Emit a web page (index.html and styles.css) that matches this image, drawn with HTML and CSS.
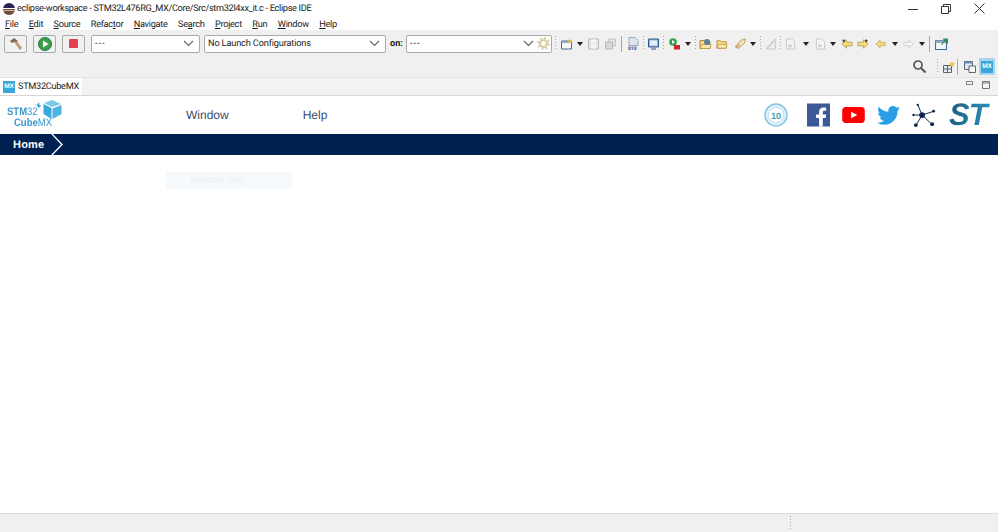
FILE: index.html
```html
<!DOCTYPE html>
<html lang="en">
<head>
  <meta charset="UTF-8" />
  <title>eclipse-workspace - Eclipse IDE</title>
  <link rel="stylesheet" href="styles.css">
</head>
<body>
  <svg class="defs" width="0" height="0">
    <symbol id="caret" viewBox="0 0 6 4"><path d="M0 0h6L3 4z" fill="#222"/></symbol>
    <symbol id="chev" viewBox="0 0 11 7"><path d="M1 1l4.500 4.500L10 1" fill="none" stroke="#666" stroke-width="1.200"/></symbol>
    <symbol id="arrow-left" viewBox="0 0 13 11"><path d="M6 1L1 5.500 6 10V7.500h6v-4H6z" fill="currentColor" stroke="#a8914a" stroke-width=".8"/><circle cx="3" cy="2" r="1.500" fill="#4a4a3a"/></symbol>
    <symbol id="arrow-right" viewBox="0 0 13 11"><path d="M7 1l5 4.500L7 10V7.500H1v-4h6z" fill="currentColor" stroke="#a8914a" stroke-width=".8"/><circle cx="10" cy="2" r="1.500" fill="#4a4a3a"/></symbol>
    <symbol id="arrow-plain-left" viewBox="0 0 13 11"><path d="M6 1L1 5.500 6 10V7.500h6v-4H6z" fill="currentColor" stroke="#b5a05a" stroke-width=".8"/></symbol>
    <symbol id="arrow-plain-right" viewBox="0 0 13 11"><path d="M7 1l5 4.500L7 10V7.500H1v-4h6z" fill="currentColor" stroke="#c4c4c4" stroke-width=".8"/></symbol>
    <symbol id="folder" viewBox="0 0 13 11"><path d="M1 2h4l1 1h5v7H1z" fill="#f7d98c" stroke="#b58b35"/><path d="M1 10l2-4h9l-1 4z" fill="#fbe7ac" stroke="#b58b35" stroke-width=".7"/></symbol>
    <symbol id="file-grey" viewBox="0 0 11 13"><path d="M1 1h6l3 3v8H1z" fill="#f4f4f4" stroke="#c4c4c4"/><path d="M3 7h4v3H3z" fill="#d2d2d2"/></symbol>
  </svg>

  <header class="titlebar">
    <svg class="eclipse-logo" width="12" height="12" viewBox="0 0 12 12">
      <circle cx="6" cy="6" r="6" fill="#2c2255"/>
      <path d="M0 5h12v1H0zM.3 7.200h11.400v.9H.3z" fill="#fff"/>
      <path d="M0 6a6 6 0 0 0 12 0z" fill="#f7941e" opacity=".35"/>
    </svg>
    <span class="window-title">eclipse-workspace - STM32L476RG_MX/Core/Src/stm32l4xx_it.c - Eclipse IDE</span>
    <div class="window-controls">
      <svg width="10" height="10" viewBox="0 0 10 10"><path d="M0 5.500h10" stroke="#333"/></svg>
      <svg width="10" height="10" viewBox="0 0 10 10"><path d="M.5 2.500h7v7h-7zM2.500 2.500v-2h7v7h-2" fill="none" stroke="#333"/></svg>
      <svg width="11" height="11" viewBox="0 0 11 11"><path d="M.5.500l10 10M10.500.500l-10 10" stroke="#333"/></svg>
    </div>
  </header>

  <nav class="menubar">
    <span><u>F</u>ile</span>
    <span><u>E</u>dit</span>
    <span><u>S</u>ource</span>
    <span>Refac<u>t</u>or</span>
    <span><u>N</u>avigate</span>
    <span>Se<u>a</u>rch</span>
    <span><u>P</u>roject</span>
    <span><u>R</u>un</span>
    <span><u>W</u>indow</span>
    <span><u>H</u>elp</span>
  </nav>

  <div class="toolbar">
    <button class="launch-btn">
      <svg width="14" height="14" viewBox="0 0 14 14"><path d="M1 4l4-3 4 3-2 2-2-1-2 1z" fill="#7d6a55"/><path d="M5.500 5.500l2-1.500 5.500 7-2 2z" fill="#b8966a"/></svg>
    </button>
    <button class="launch-btn">
      <svg width="14" height="14" viewBox="0 0 14 14"><circle cx="7" cy="7" r="6.500" fill="#3c9d4b" stroke="#1f7a35"/><path d="M5 3.500L10.500 7 5 10.500z" fill="#fff"/></svg>
    </button>
    <button class="launch-btn">
      <svg width="9" height="9" viewBox="0 0 10 10"><rect width="10" height="10" rx="1" fill="#e2404e"/></svg>
    </button>

    <div class="combo combo-mode"><span class="dashes">---</span><svg width="11" height="7"><use href="#chev"/></svg></div>
    <div class="combo combo-config"><span>No Launch Configurations</span><svg width="11" height="7"><use href="#chev"/></svg></div>
    <span class="on-label">on:</span>
    <div class="combo combo-target">
      <span class="dashes">---</span><svg width="11" height="7"><use href="#chev"/></svg>
      <svg class="gear" width="13" height="13" viewBox="0 0 13 13"><circle cx="6.500" cy="6.500" r="3.500" fill="none" stroke="#d8cfa4" stroke-width="2.200"/><circle cx="6.500" cy="6.500" r="5.500" fill="none" stroke="#d8cfa4" stroke-width="2" stroke-dasharray="2 2.300"/></svg>
    </div>

    <i class="grip ml3"></i>
    <svg class="tool w12 ml5" viewBox="0 0 12 11"><path d="M.5 2.500h10v8H.5z" fill="#f7f9fc" stroke="#456a94"/><path d="M.5 2.500h10v2H.5z" fill="#8aa6c6"/><path d="M9 0l.8 1.500 1.700.5-1.200 1.100.3 1.700L9 4l-1.600.8.300-1.700L6.500 2l1.700-.5z" fill="#e9c53c"/></svg>
    <svg class="caret ml4"><use href="#caret"/></svg>
    <svg class="tool w11 ml5" viewBox="0 0 11 11"><path d="M.5.500h10v10H.5z" fill="#e5e5e5" stroke="#bbb"/><path d="M3 1h5v3H3zM3 6h5v4H3z" fill="#f7f7f7"/></svg>
    <svg class="tool w11 ml6" viewBox="0 0 11 11"><path d="M3.500.500h7v7h-7z" fill="#e5e5e5" stroke="#c3c3c3"/><path d="M.5 3.500h7v7h-7z" fill="#d8d8d8" stroke="#b7b7b7"/></svg>
    <i class="sep ml5"></i>
    <svg class="tool h13 ml6" viewBox="0 0 11 13"><path d="M1 .500h6l3 3v5H1z" fill="#dfe6f0" stroke="#9aa9be"/><text x="0" y="12.500" class="tiny-label">010</text></svg>
    <i class="grip ml4"></i>
    <svg class="tool w11 ml4" viewBox="0 0 11 11"><path d="M.5.500h10v8H.5z" fill="#8db4d8" stroke="#2d5d88"/><path d="M2 2h7v5H2z" fill="#e6f0f8"/><path d="M3 10.500h5" stroke="#2d5d88"/></svg>
    <i class="grip ml4"></i>
    <svg class="tool w11 ml5" viewBox="0 0 11 12"><circle cx="4" cy="4" r="3.800" fill="#2f9e4f"/><path d="M3 2l3 2-3 2z" fill="#fff"/><path d="M5 7h6v4.500H5z" fill="#c9252d"/></svg>
    <svg class="caret ml5"><use href="#caret"/></svg>
    <i class="grip ml4"></i>
    <svg class="tool w13 ml3" viewBox="0 0 13 11"><use href="#folder"/><circle cx="8" cy="3.500" r="3" fill="#5b7f9e"/></svg>
    <svg class="tool w12 ml4" viewBox="0 0 13 11"><use href="#folder"/></svg>
    <svg class="tool w11 ml7" viewBox="0 0 11 11"><path d="M10.500.500c-3 0-6 2-7.500 5l2.500 2.500c3-1.500 5-4.500 5-7.500z" fill="#efe2b5" stroke="#b9a25c"/><path d="M3 6L.500 7.500 1 9l2 .500zM5 8l-1.500 2.500" stroke="#cc9b61" fill="#e2b67d"/></svg>
    <svg class="caret ml4"><use href="#caret"/></svg>
    <i class="grip ml4"></i>
    <svg class="tool w11 ml4" viewBox="0 0 11 11"><path d="M10 .500L1 10.500h9.500z" fill="#efefef" stroke="#c6c6c6"/><path d="M3 9L9 3" stroke="#bdbdbd"/></svg>
    <i class="grip ml4"></i>
    <svg class="tool w11 ml4" viewBox="0 0 11 13"><use href="#file-grey"/></svg>
    <svg class="caret ml7"><use href="#caret"/></svg>
    <svg class="tool w11 ml6" viewBox="0 0 11 13"><use href="#file-grey"/></svg>
    <svg class="caret ml4"><use href="#caret"/></svg>
    <svg class="tool w12 ml5 tone-yellow" viewBox="0 0 13 11"><use href="#arrow-left"/></svg>
    <svg class="tool w12 ml4 tone-yellow" viewBox="0 0 13 11"><use href="#arrow-right"/></svg>
    <svg class="tool w11 ml6 tone-yellow" viewBox="0 0 13 11"><use href="#arrow-plain-left"/></svg>
    <svg class="caret ml6"><use href="#caret"/></svg>
    <svg class="tool w11 ml5 tone-pale" viewBox="0 0 13 11"><use href="#arrow-plain-right"/></svg>
    <svg class="caret ml5"><use href="#caret"/></svg>
    <i class="sep ml4"></i>
    <svg class="tool w13 ml5" viewBox="0 0 12 11"><path d="M.5 2.500h10v8H.5z" fill="#f4f7fb" stroke="#45688f"/><path d="M.5 2.500h10v2H.5z" fill="#8aa6c6"/><path d="M6 6l4-4M8 1h4v4z" stroke="#2f8f4e" fill="#2f8f4e"/></svg>
  </div>

  <div class="perspective-bar">
    <svg width="13" height="13" viewBox="0 0 13 13"><circle cx="5" cy="5" r="4" fill="none" stroke="#555" stroke-width="1.700"/><path d="M8 8l4.500 4.500" stroke="#555" stroke-width="2"/></svg>
    <i class="grip ml11"></i>
    <svg class="tool w12 ml5" viewBox="0 0 12 12"><path d="M.5 4.500h8v7h-8zM.5 8h8M4.500 4.500v7" fill="#e9eef4" stroke="#567"/><path d="M9 0l1 2 2 .500-1.500 1.500.500 2-2-1-2 1 .500-2L6 2.500 8 2z" fill="#e9c53c"/></svg>
    <i class="sep ml2"></i>
    <svg class="tool w12 ml6" viewBox="0 0 12 12"><path d="M.5.500h8v8h-8z" fill="#dfe7f0" stroke="#567"/><path d="M.5.500h8v2h-8z" fill="#6f8eb0"/><path d="M5 5h6.500v6.500H5z" fill="#f4f4f4" stroke="#666"/></svg>
    <div class="perspective-active"><span class="mx-badge">MX</span></div>
  </div>

  <div class="tabbar">
    <div class="tab"><span class="mx-badge">MX</span><span class="tab-label">STM32CubeMX</span></div>
    <div class="tab-controls">
      <svg width="7" height="4" viewBox="0 0 7 4"><rect x=".5" y=".5" width="6" height="3" fill="#f4f4f4" stroke="#888"/></svg>
      <svg width="8" height="8" viewBox="0 0 8 8"><path d="M.5.500h7v7h-7zM.5 2h7" fill="#f4f4f4" stroke="#777"/></svg>
    </div>
  </div>

  <main class="cube">
    <div class="cube-head">
      <div class="cube-logo">
        <span class="logo-stm">STM<b>32</b></span>
        <span class="logo-cube">Cube<b>MX</b></span>
        <svg class="logo-art" width="28" height="19" viewBox="0 0 28 19">
          <path d="M0 4l3 1 2-3 .500 3 2 1-3 2-1-2z" fill="#39a9db"/>
          <path d="M18 0l-8 3 8 4 9-3z" fill="#7cc8e8"/>
          <path d="M9.500 4l8 4v11l-8-5z" fill="#39a9db"/>
          <path d="M27.500 5l-9 3.500V19l9-5z" fill="#4db4e0"/>
        </svg>
      </div>
      <span class="cube-menu menu-window">Window</span>
      <span class="cube-menu menu-help">Help</span>
      <div class="social">
        <svg class="anniversary" width="24" height="24" viewBox="0 0 24 24">
          <circle cx="12" cy="12" r="11" fill="#dff0f8" stroke="#8cc6e2" stroke-width="1.500"/>
          <circle cx="12" cy="12" r="7.500" fill="#fff" stroke="#a9d5ea" stroke-dasharray="1.500 1"/>
          <text x="12" y="15.500" text-anchor="middle" class="anniversary-num">10</text>
        </svg>
        <svg class="fb" width="23" height="24" viewBox="0 0 24 24"><rect width="24" height="24" fill="#3b5998"/><path d="M16.500 24v-9h3l.500-3.600h-3.500V9.200c0-1 .3-1.700 1.800-1.700H20V4.300c-.4 0-1.500-.2-2.800-.2-2.800 0-4.600 1.700-4.600 4.700v2.600H9.500V15h3.100v9z" fill="#fff"/></svg>
        <svg class="yt" width="23" height="16" viewBox="0 0 24 17"><rect width="24" height="17" rx="4" fill="#f00"/><path d="M9.500 5l6.500 3.500L9.500 12z" fill="#fff"/></svg>
        <svg class="tw" width="23" height="19" viewBox="0 0 24 20"><path d="M24 2.400c-.9.400-1.800.7-2.800.8 1-.6 1.800-1.600 2.200-2.700-1 .6-2 1-3.100 1.200A4.900 4.900 0 0 0 11.900 6.100C7.800 5.900 4.200 4 1.700.9c-1.300 2.200-.7 5.100 1.500 6.600-.8 0-1.600-.2-2.200-.6 0 2.300 1.600 4.500 4 5-.7.200-1.500.2-2.200.1.600 2 2.400 3.400 4.600 3.400A9.900 9.900 0 0 1 0 17.500 14 14 0 0 0 21.500 5.100c1-.7 1.800-1.600 2.500-2.700z" fill="#2a9fe8"/></svg>
        <svg class="net" width="24" height="25" viewBox="0 0 25 25">
          <path d="M10.500 12L6 1M10.500 12L1 12M10.500 12L4 23M10.500 12L21 22M10.500 12L23 8" stroke="#0b2550" stroke-width="1"/>
          <circle cx="10.500" cy="12" r="3" fill="#0b2550"/><circle cx="6" cy="1.500" r="1.200" fill="#0b2550"/><circle cx="1.500" cy="12" r="1.200" fill="#0b2550"/>
          <circle cx="4" cy="22.500" r="2" fill="#0b2550"/><circle cx="21" cy="21.500" r="2" fill="#0b2550"/><circle cx="22.500" cy="8" r="1.500" fill="#0b2550"/>
        </svg>
        <span class="st-logo">ST</span>
      </div>
    </div>
    <div class="crumbs">
      <span class="crumb-home">Home</span>
      <svg class="crumb-arrow" width="14" height="21" viewBox="0 0 14 21"><path d="M1 -1l11 11.500L1 22" fill="none" stroke="#fff" stroke-width="1.300"/></svg>
    </div>
    <div class="ghost-menu"><span>Window Skip</span></div>
  </main>

  <footer class="statusbar"><i class="grip ml3"></i></footer>
</body>
</html>
```

FILE: styles.css
```css
* {
  box-sizing: border-box;
}

html, body {
  height: 100%;
}

body {
  margin: 0;
  display: flex;
  flex-direction: column;
  overflow: hidden;
  background: #f0f0f0;
  color: #1a1a1a;
  font-family: Roboto, "Open Sans", sans-serif;
  font-size: 9.200px;
  text-rendering: geometricPrecision;
}

.defs {
  position: absolute;
}

/* window chrome */
.titlebar {
  display: flex;
  align-items: center;
  height: 17px;
  padding-left: 3px;
  background: #fff;
}

.window-title {
  margin-left: 2px;
  letter-spacing: -0.33px;
}

.window-controls {
  display: flex;
  align-items: center;
  gap: 23px;
  margin-left: auto;
  padding-right: 13px;
}

.menubar {
  display: flex;
  align-items: center;
  gap: 10.500px;
  height: 13px;
  padding: 1px 0 0 5px;
  background: #fff;
  letter-spacing: -0.3px;
}

/* main toolbar */
.toolbar {
  display: flex;
  align-items: center;
  height: 26px;
  padding: 1px 0 0 4px;
  background: #f0f0f0;
}

.launch-btn {
  display: flex;
  align-items: center;
  justify-content: center;
  width: 23px;
  height: 18px;
  margin-right: 6px;
  padding: 0;
  border: 1px solid #aaa;
  border-radius: 2px;
  background: #f1f1f1;
}

.combo {
  display: flex;
  align-items: center;
  justify-content: space-between;
  height: 18px;
  padding: 0 5px 0 3px;
  border: 1px solid #a9a9a9;
  border-radius: 2px;
  background: #fff;
  letter-spacing: -0.15px;
}

.dashes {
  letter-spacing: 1px;
}

.combo-mode {
  width: 109px;
  margin-right: 4px;
}

.combo-config {
  width: 182px;
}

.on-label {
  width: 20px;
  padding-left: 4px;
  font-weight: 700;
}

.combo-target {
  width: 146px;
  padding-right: 1px;
}

.combo-target span {
  margin-right: auto;
}

.gear {
  margin-left: 3px;
}

.tool {
  flex: none;
  height: 12px;
}

.w11 { width: 11px; }
.w12 { width: 12px; }
.w13 { width: 13px; }
.h13 { width: 11px; height: 13px; }

.ml2 { margin-left: 2px; }
.ml3 { margin-left: 3px; }
.ml4 { margin-left: 4px; }
.ml5 { margin-left: 5px; }
.ml6 { margin-left: 6px; }
.ml7 { margin-left: 7px; }
.ml11 { margin-left: 11px; }

.caret {
  flex: none;
  width: 6px;
  height: 4px;
}

.grip {
  flex: none;
  width: 1px;
  height: 15px;
  background: repeating-linear-gradient(#aaa 0 1px, transparent 1px 3px);
}

.sep {
  flex: none;
  width: 1px;
  height: 16px;
  background: #a8a8a8;
}

.tiny-label {
  font-size: 5px;
  font-weight: 700;
  fill: #345;
}

.tone-yellow {
  color: #f7dc78;
}

.tone-pale {
  color: #f5f5f5;
}

.perspective-bar {
  display: flex;
  align-items: center;
  justify-content: flex-end;
  height: 21px;
  padding-right: 3px;
}

.perspective-active {
  display: flex;
  align-items: center;
  justify-content: center;
  width: 16px;
  height: 17px;
  margin-left: 3px;
  background: #a8d4f0;
}

.mx-badge {
  display: flex;
  align-items: center;
  justify-content: center;
  flex: none;
  width: 12px;
  height: 12px;
  background: #3aa5d8;
  color: #fff;
  font-family: "Liberation Sans", sans-serif;
  font-size: 6.500px;
  font-weight: 700;
}

/* editor tab */
.tabbar {
  display: flex;
  justify-content: space-between;
  height: 19px;
  border-top: 1px solid #e2e2e2;
  border-bottom: 1px solid #d6d6d6;
  background: #f2f2f2;
}

.tab {
  display: flex;
  align-items: center;
  gap: 3px;
  width: 82px;
  padding-left: 3px;
  background: #fff;
}

.tab-label {
  letter-spacing: -0.3px;
}

.tab-controls {
  display: flex;
  align-items: flex-start;
  gap: 9px;
  padding: 3px 8px 0 0;
}

/* cube mx view */
.cube {
  flex: 1;
  background: #fff;
}

.cube-head {
  display: flex;
  align-items: center;
  height: 38px;
  padding-left: 6px;
}

.cube-logo {
  position: relative;
  flex: none;
  width: 56px;
  height: 34px;
  color: #3a97c9;
  font-family: "Liberation Sans", sans-serif;
  font-size: 9.500px;
  font-weight: 700;
  line-height: 10px;
}

.cube-logo b {
  font-weight: 400;
}

.logo-stm {
  position: absolute;
  left: 1px;
  top: 10px;
  transform: scaleY(1.15);
}

.logo-cube {
  position: absolute;
  left: 8px;
  top: 21px;
  transform: scaleY(1.15);
}

.logo-art {
  position: absolute;
  left: 28px;
  top: 2px;
}

.cube-menu {
  color: #3c4a6b;
  font-family: "Liberation Sans", sans-serif;
  font-size: 12px;
}

.menu-window {
  margin-left: 124px;
}

.menu-help {
  margin-left: 74px;
}

.social {
  display: flex;
  align-items: center;
  margin-left: auto;
  padding-right: 7px;
}

.anniversary-num {
  font-family: "Liberation Sans", sans-serif;
  font-size: 9px;
  font-weight: 700;
  fill: #4a9cc4;
}

.fb { margin-left: 19px; }
.yt { margin-left: 12px; }
.tw { margin-left: 12px; }
.net { margin-left: 12px; }

.st-logo {
  width: 42px;
  margin-left: 13px;
  background: linear-gradient(100deg, #1a5c7e, #2f93bc);
  -webkit-background-clip: text;
  background-clip: text;
  color: transparent;
  font-family: "Liberation Sans", sans-serif;
  font-size: 31px;
  font-style: italic;
  font-weight: 700;
  line-height: 24px;
  letter-spacing: -1px;
}

.crumbs {
  display: flex;
  align-items: center;
  height: 21px;
  background: #002052;
}

.crumb-home {
  padding-left: 13px;
  color: #fff;
  font-family: "Liberation Sans", sans-serif;
  font-size: 11px;
  font-weight: 700;
  letter-spacing: 0.2px;
}

.crumb-arrow {
  margin-left: 6px;
}

.ghost-menu {
  width: 126px;
  height: 17px;
  margin: 17px 0 0 166px;
  padding-left: 24px;
  background: #f7fafd;
  color: #eceff3;
  font-family: "Liberation Sans", sans-serif;
  font-size: 9.500px;
  line-height: 17px;
}

.statusbar {
  display: flex;
  align-items: center;
  height: 19px;
  padding-left: 787px;
  border-top: 1px solid #dcdcdc;
}
```
